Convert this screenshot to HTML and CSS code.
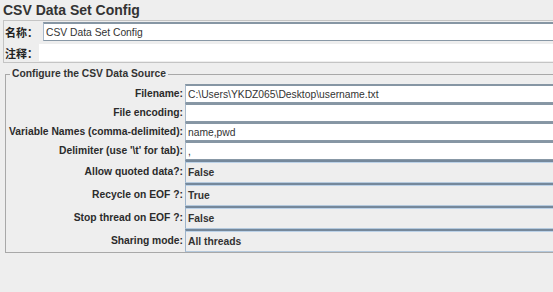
FILE: index.html
```html
<!DOCTYPE html>
<html lang="en">
<head>
  <meta charset="UTF-8">
  <title>CSV Data Set Config</title>
  <link rel="stylesheet" href="styles.css">
</head>
<body>

  <div class="page">
    <h1 class="title">CSV Data Set Config</h1>

    <div class="name-panel">
      <div class="name-row">
        <label class="cjk-label" for="name">名称：</label>
        <input type="text" id="name" class="name-field" value="CSV Data Set Config">
      </div>
      <div class="name-row">
        <label class="cjk-label short" for="comment">注释：</label>
        <input type="text" id="comment" class="comment-field" value="">
      </div>
    </div>

    <fieldset class="source">
      <legend>Configure the CSV Data Source</legend>
      <div class="source-grid">
        <label for="filename">Filename:</label>
        <input type="text" id="filename" class="text-field" value="C:\Users\YKDZ065\Desktop\username.txt">

        <label for="encoding">File encoding:</label>
        <input type="text" id="encoding" class="text-field" value="">

        <label for="names">Variable Names (comma-delimited):</label>
        <input type="text" id="names" class="text-field" value="name,pwd">

        <label for="delimiter">Delimiter (use '\t' for tab):</label>
        <input type="text" id="delimiter" class="text-field" value=",">

        <label>Allow quoted data?:</label>
        <div class="combo">False</div>

        <label>Recycle on EOF ?:</label>
        <div class="combo">True</div>

        <label>Stop thread on EOF ?:</label>
        <div class="combo">False</div>

        <label>Sharing mode:</label>
        <div class="combo">All threads</div>
      </div>
    </fieldset>
  </div>

</body>
</html>
```

FILE: styles.css
```css
body {
  margin: 0;
  background-color: #eeeeee;
  font-family: "Liberation Sans", "Noto Sans CJK SC", sans-serif;
  font-size: 10.3px;
  color: #2b2b2b;
  overflow: hidden;
}

/* the panel is cut off at the right edge, so no right borders */
.page {
  width: 100%;
}

.title {
  margin: 0;
  height: 18px;
  padding: 2px 0 0 3px;
  font-size: 14px;
  line-height: 17px;
  font-weight: bold;
  color: #333;
}

.name-panel {
  margin-left: 3px;
  border: 1px solid #c4c4c4;
  border-right: none;
  padding: 1px 0;
}

.name-row {
  display: flex;
  align-items: center;
}

.name-row + .name-row {
  margin-top: 3px;
}

.cjk-label {
  width: 38px;
  flex-shrink: 0;
  padding-left: 1px;
  font-size: 11px;
  font-weight: bold;
  color: #222;
}

.cjk-label.short {
  width: 34px;
}

input {
  font: inherit;
  color: #333;
  box-sizing: border-box;
  margin: 0;
  min-width: 0;
  outline: none;
}

.name-field {
  flex: 1;
  height: 19px;
  padding: 0 2px;
  background-color: white;
  border: 1px solid #a9bacb;
  border-top: 2px solid #8696a4;
  border-bottom-color: #8898a6;
  border-right: none;
}

.comment-field {
  flex: 1;
  height: 17px;
  padding: 0 2px;
  background-color: white;
  border: none;
}

.source {
  margin: 5px 0 0 5px;
  padding: 4px 0 0 1px;
  border: 1px solid #a8a8a8;
  border-right: none;
  min-width: 0;
}

.source legend {
  margin-left: 3px;
  padding: 0 2px;
  line-height: 12px;
  font-weight: bold;
  color: #333;
}

.source-grid {
  display: grid;
  grid-template-columns: 178px 1fr;
  grid-template-rows: repeat(4, 19px) repeat(4, 23px);
}

.source-grid label {
  align-self: center;
  text-align: right;
  padding-right: 2px;
  font-weight: bold;
  white-space: nowrap;
  color: #2b2b2b;
}

.text-field {
  width: 100%;
  height: 19px;
  padding: 0 2px;
  background-color: white;
  border: 1px solid #a9bacb;
  border-top: 2px solid #8696a4;
  border-bottom-color: #8898a6;
  border-right: none;
}

.combo {
  display: flex;
  align-items: center;
  padding-left: 2px;
  font-weight: bold;
  color: #333;
  border-left: 1px solid #9db4cb;
  border-top: 2px solid #75889b;
  border-bottom: 1px solid #b4c9dd;
  box-shadow: inset 0 1px 0 #bcd2e8;
}
```
